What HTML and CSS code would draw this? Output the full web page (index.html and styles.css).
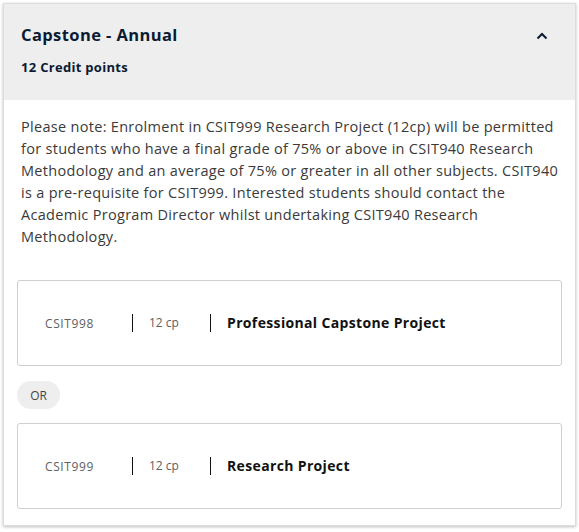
FILE: index.html
```html
<!DOCTYPE html>
<html>
<head>
<meta charset="utf-8">
<link rel="stylesheet" href="styles.css">
</head>
<body>
<div class="card">
  <div class="head">
    <div class="head-row">
      <h2 class="title">Capstone - Annual</h2>
      <svg class="chev" width="12" height="8" viewBox="0 0 12 8"><path d="M1.5 6.5 L6 2 L10.5 6.5" fill="none" stroke="#0b1a33" stroke-width="2"/></svg>
    </div>
    <div class="credits">12 Credit points</div>
  </div>
  <div class="body">
    <p class="note">Please note: Enrolment in CSIT999 Research Project (12cp) will be permitted for students who have a final grade of 75% or above in CSIT940 Research Methodology and an average of 75% or greater in all other subjects. CSIT940 is a pre-requisite for CSIT999. Interested students should contact the Academic Program Director whilst undertaking CSIT940 Research Methodology.</p>
    <div class="subject">
      <span class="code">CSIT998</span>
      <span class="cp">12 cp</span>
      <span class="name">Professional Capstone Project</span>
    </div>
    <div class="or">OR</div>
    <div class="subject">
      <span class="code">CSIT999</span>
      <span class="cp">12 cp</span>
      <span class="name">Research Project</span>
    </div>
  </div>
</div>
</body>
</html>
```
FILE: styles.css
```css
* { box-sizing: border-box; }
body {
  margin: 0;
  padding: 3px;
  font-family: "Open Sans", "Liberation Sans", sans-serif;
  background: #fff;
}
.card {
  width: 573px;
  height: 523px;
  border: 1px solid #dcdcdc;
  box-shadow: 0 1px 3px rgba(0,0,0,0.25);
  background: #fff;
}
.head {
  background: #eeeeee;
  padding: 20px 17px 0 17px;
  height: 96px;
}
.head-row {
  display: flex;
  align-items: center;
  justify-content: space-between;
  padding-right: 10px;
}
.title {
  margin: 0;
  font-size: 16.5px;
  letter-spacing: 0.4px;
  font-weight: 700;
  color: #0b1a33;
  line-height: 22px;
}
.chev { display: block; margin-top: 1px; }
.credits {
  margin-top: 12px;
  font-size: 13px;
  letter-spacing: 0.3px;
  font-weight: 700;
  color: #0b1a33;
}
.body {
  padding: 16px 13px 0 13px;
}
.note {
  margin: 0 0 32px 4px;
  font-size: 14.5px;
  letter-spacing: 0.3px;
  line-height: 22px;
  color: #3a3a3a;
  font-weight: 400;
}
.subject {
  height: 86px;
  border: 1px solid #cfcfcf;
  border-radius: 3px;
  display: flex;
  align-items: center;
  padding-left: 27px;
}
.code {
  width: 87px;
  font-size: 12px;
  letter-spacing: 0.6px;
  color: #606060;
}
.cp {
  border-left: 1.5px solid #111;
  height: 18px;
  line-height: 18px;
  width: 78px;
  padding-left: 16px;
  font-size: 12px;
  color: #606060;
}
.name {
  border-left: 1.5px solid #111;
  height: 18px;
  line-height: 18px;
  padding-left: 16px;
  font-size: 14px;
  letter-spacing: 0.35px;
  font-weight: 700;
  color: #111;
}
.or {
  margin: 15px 0 14px 0;
  width: 43px;
  height: 28px;
  border-radius: 14px;
  background: #eeeeee;
  font-size: 12px;
  color: #444;
  display: flex;
  align-items: center;
  justify-content: center;
}
```
